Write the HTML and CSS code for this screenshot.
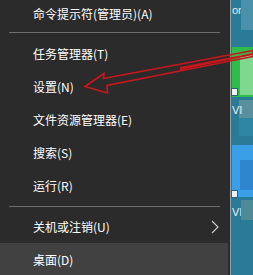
FILE: index.html
```html
<!DOCTYPE html>
<html lang="zh">
<head>
<meta charset="utf-8">
<link rel="stylesheet" href="styles.css">
</head>
<body>
<div class="screen">
  <div class="menu">
    <div class="item first">命令提示符(管理员)(A)</div>
    <div class="sep sep1"></div>
    <div class="item">任务管理器(T)</div>
    <div class="item">设置(N)</div>
    <div class="item">文件资源管理器(E)</div>
    <div class="item">搜索(S)</div>
    <div class="item">运行(R)</div>
    <div class="sep sep2"></div>
    <div class="item sub">关机或注销(U)
      <svg class="chev" width="8" height="14" viewBox="0 0 8 14"><path d="M1 1 L7 7 L1 13" fill="none" stroke="#cfcfcf" stroke-width="1.1"/></svg>
    </div>
    <div class="item active">桌面(D)</div>
  </div>
  <div class="edge"></div>
  <div class="desktop">
    <span class="dtext t1">or</span>
    <div class="blk b1"></div>
    <div class="blk b2"></div>
    <div class="green"></div>
    <div class="green-l"></div>
    <div class="short s1"></div>
    <span class="dtext t2">VI</span>
    <div class="blk b3"></div>
    <div class="blue"></div>
    <div class="blue-l"></div>
    <div class="short s2"></div>
    <span class="dtext t3">VI</span>
    <div class="blk b4"></div>
  </div>
  <svg class="arrow" width="253" height="275" viewBox="0 0 253 275">
    <polygon points="85,86.5 104,73.5 103.5,78.5 253,50.5 253,56.5 107,85.5 107.5,93" fill="none" stroke="#c8161c" stroke-width="1.6" stroke-linejoin="miter"/>
    <polygon points="180,67 253,53 253,55 180,70" fill="#c8161c"/>
  </svg>
</div>
</body>
</html>
```
FILE: styles.css
```css
html, body {
  margin: 0;
  padding: 0;
  background: #2b2b2b;
}
.screen {
  position: relative;
  width: 253px;
  height: 275px;
  overflow: hidden;
  display: flex;
  font-family: "Noto Sans CJK SC", "Microsoft YaHei", sans-serif;
  font-size: 12px;
  color: #ffffff;
}
.menu {
  width: 230px;
  flex: none;
  background: #2b2b2b;
  display: flex;
  flex-direction: column;
}
.item {
  height: 33px;
  flex: none;
  display: flex;
  align-items: center;
  padding-left: 33px;
  position: relative;
  box-sizing: border-box;
  margin-right: 2px;
}
.item.first {
  height: 26px;
}
.item.active {
  background: #414141;
}
.sep {
  flex: none;
  position: relative;
}
.sep::after {
  content: "";
  position: absolute;
  left: 9px;
  width: 211px;
  height: 1px;
  background: #6e6e6e;
}
.sep1 {
  height: 11px;
}
.sep1::after {
  top: 6px;
}
.sep2 {
  height: 8px;
}
.sep2::after {
  top: 4px;
}
.chev {
  position: absolute;
  left: 211px;
  top: 10px;
}
.edge {
  width: 1px;
  flex: none;
  background: #9a9a9a;
}
.desktop {
  flex: 1;
  position: relative;
  background: #2a7b98;
}
.dtext {
  position: absolute;
  left: 1px;
  font-family: "Liberation Sans", sans-serif;
  font-size: 11px;
  color: #e8eef0;
  line-height: 12px;
}
.t1 { top: 4px; }
.t2 { top: 104px; }
.t3 { top: 206px; }
.blk {
  position: absolute;
  background: #3e8ba6;
}
.b1 { left: 10px; top: 0; width: 12px; height: 30px; background: #4a92ab; }
.b2 { left: 8px; top: 100px; width: 14px; height: 18px; background: #5b8f9e; }
.b3 { left: 8px; top: 118px; width: 14px; height: 18px; background: #2f85a4; }
.b4 { left: 10px; top: 200px; width: 12px; height: 20px; background: #4f8a99; }
.green {
  position: absolute;
  left: 1px;
  top: 47px;
  width: 21px;
  height: 50px;
  background: #2ebd4c;
}
.green-l {
  position: absolute;
  left: 9px;
  top: 55px;
  width: 13px;
  height: 40px;
  background: #7fd88e;
}
.blue {
  position: absolute;
  left: 1px;
  top: 145px;
  width: 21px;
  height: 52px;
  background: #3a9fe6;
}
.blue-l {
  position: absolute;
  left: 9px;
  top: 160px;
  width: 13px;
  height: 30px;
  background: #2e86cf;
}
.short {
  position: absolute;
  left: 0;
  width: 7px;
  height: 8px;
  background: #f0f0f0;
  border: 1px solid #2a5e8a;
  box-sizing: border-box;
}
.s1 { top: 88px; }
.s2 { top: 190px; }
.arrow {
  position: absolute;
  left: 0;
  top: 0;
  pointer-events: none;
}
```
